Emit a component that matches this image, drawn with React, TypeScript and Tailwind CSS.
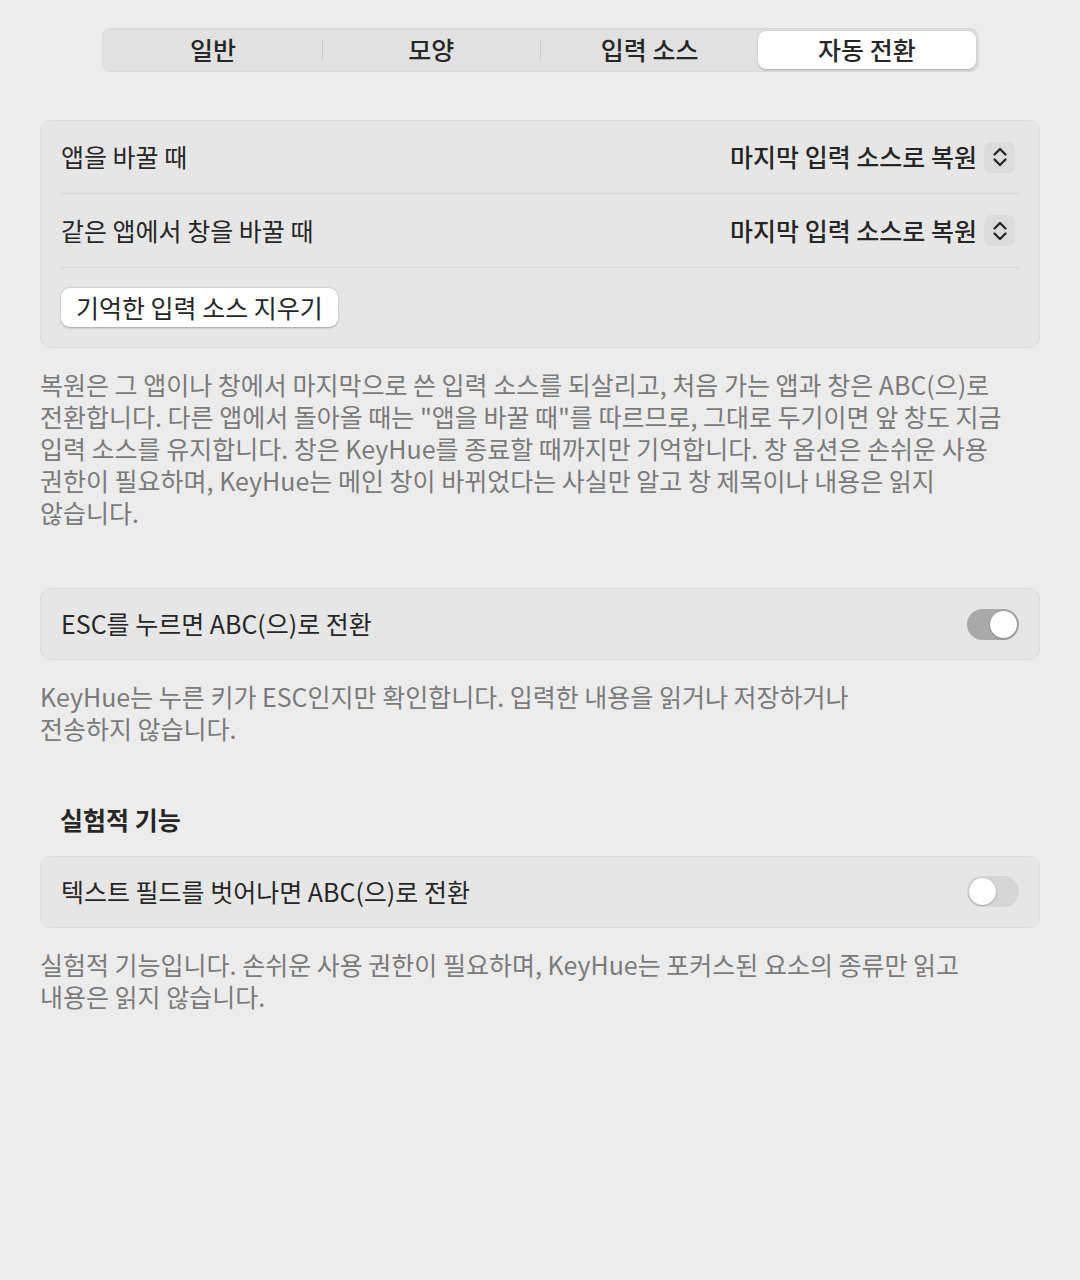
import React from "react";

const font = { fontFamily: '"Noto Sans CJK KR", "Noto Sans", sans-serif' };

function Chevrons() {
  return (
    <div className="flex h-[31px] w-[31px] items-center justify-center rounded-[7px] bg-[#dcdcdc]">
      <svg viewBox="0 0 24 24" width="24" height="24" fill="none" stroke="#262626" strokeWidth="2.3" strokeLinecap="round" strokeLinejoin="round">
        <path d="M6.5 9.5 12 4 17.5 9.5" />
        <path d="M6.5 14.5 12 20 17.5 14.5" />
      </svg>
    </div>
  );
}

function Toggle({ on }: { on: boolean }) {
  return (
    <div className={`flex h-[31px] w-[52px] items-center rounded-full px-[2px] ${on ? "justify-end bg-[#a9a9a9]" : "justify-start bg-[#d6d6d6]"}`}>
      <div className="h-[27px] w-[27px] rounded-full bg-white shadow-[0_0.5px_2px_rgba(0,0,0,0.35)]" />
    </div>
  );
}

function Lines({ lines, className = "" }: { lines: string[]; className?: string }) {
  return (
    <div className={`px-10 text-[25px] leading-[32px] text-[#7a7a7a] ${className}`}>
      {lines.map((l, i) => (
        <div key={i} className="whitespace-nowrap">{l}</div>
      ))}
    </div>
  );
}

export default function App() {
  const tabs = ["일반", "모양", "입력 소스", "자동 전환"];
  return (
    <div style={font} className="min-h-[1280px] w-[1080px] bg-[#ececec] text-[#262626]">
      <div className="flex justify-center pt-[28px]">
        <div className="flex h-[44px] w-[877px] items-center rounded-[9px] border border-[#d9d9d9] bg-[#e1e1e1] p-[2px]">
          {tabs.map((t, i) => (
            <React.Fragment key={t}>
              {i > 0 && i < 3 && <div className="h-[22px] w-px bg-[#c9c9c9]" />}
              <div
                className={`flex h-full flex-1 items-center justify-center text-[25px] font-medium ${
                  i === 3 ? "rounded-[8px] bg-white shadow-[0_0.5px_2px_rgba(0,0,0,0.25)]" : ""
                }`}
              >
                {t}
              </div>
            </React.Fragment>
          ))}
        </div>
      </div>

      <div className="mx-10 mt-[48px] rounded-[11px] border border-[#dcdcdc] bg-[#e6e6e6] px-5">
        <div className="flex h-[73px] items-center justify-between border-b border-[#d8d8d8]">
          <span className="text-[25px]">앱을 바꿀 때</span>
          <div className="mr-[4px] flex items-center gap-[7px]">
            <span className="text-[25px] font-medium">마지막 입력 소스로 복원</span>
            <Chevrons />
          </div>
        </div>
        <div className="flex h-[74px] items-center justify-between border-b border-[#d8d8d8]">
          <span className="text-[25px]">같은 앱에서 창을 바꿀 때</span>
          <div className="mr-[4px] flex items-center gap-[7px]">
            <span className="text-[25px] font-medium">마지막 입력 소스로 복원</span>
            <Chevrons />
          </div>
        </div>
        <div className="flex h-[79px] items-center">
          <div className="flex h-[39px] items-center rounded-[9px] bg-white px-[15px] text-[25px] shadow-[0_0.5px_2px_rgba(0,0,0,0.3)]">
            기억한 입력 소스 지우기
          </div>
        </div>
      </div>

      <Lines
        className="mt-[20px]"
        lines={[
          "복원은 그 앱이나 창에서 마지막으로 쓴 입력 소스를 되살리고, 처음 가는 앱과 창은 ABC(으)로",
          '전환합니다. 다른 앱에서 돌아올 때는 "앱을 바꿀 때"를 따르므로, 그대로 두기이면 앞 창도 지금',
          "입력 소스를 유지합니다. 창은 KeyHue를 종료할 때까지만 기억합니다. 창 옵션은 손쉬운 사용",
          "권한이 필요하며, KeyHue는 메인 창이 바뀌었다는 사실만 알고 창 제목이나 내용은 읽지",
          "않습니다.",
        ]}
      />

      <div className="mx-10 mt-[60px] flex h-[72px] items-center justify-between rounded-[11px] border border-[#dcdcdc] bg-[#e6e6e6] px-5">
        <span className="text-[25px]">ESC를 누르면 ABC(으)로 전환</span>
        <Toggle on />
      </div>

      <Lines
        className="mt-[20px]"
        lines={[
          "KeyHue는 누른 키가 ESC인지만 확인합니다. 입력한 내용을 읽거나 저장하거나",
          "전송하지 않습니다.",
        ]}
      />

      <div className="mt-[57px] px-[60px] text-[25px] font-bold">실험적 기능</div>

      <div className="mx-10 mt-[17px] flex h-[72px] items-center justify-between rounded-[11px] border border-[#dcdcdc] bg-[#e6e6e6] px-5">
        <span className="text-[25px]">텍스트 필드를 벗어나면 ABC(으)로 전환</span>
        <Toggle on={false} />
      </div>

      <Lines
        className="mt-[20px]"
        lines={[
          "실험적 기능입니다. 손쉬운 사용 권한이 필요하며, KeyHue는 포커스된 요소의 종류만 읽고",
          "내용은 읽지 않습니다.",
        ]}
      />
    </div>
  );
}
